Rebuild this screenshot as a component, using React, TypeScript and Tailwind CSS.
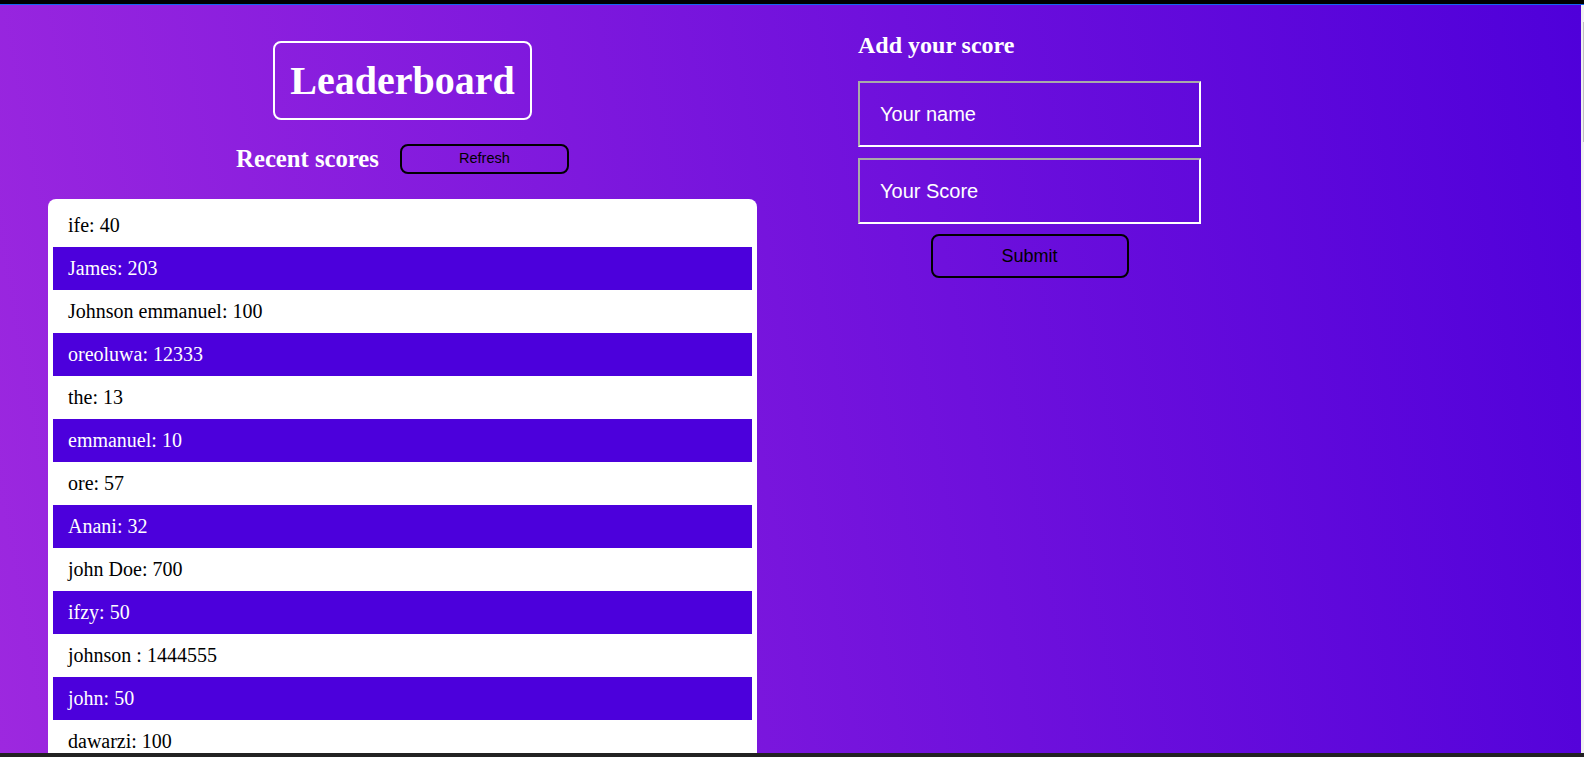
import { useState } from "react";

const scores = [
  { user: "ife", score: 40 },
  { user: "James", score: 203 },
  { user: "Johnson emmanuel", score: 100 },
  { user: "oreoluwa", score: 12333 },
  { user: "the", score: 13 },
  { user: "emmanuel", score: 10 },
  { user: "ore", score: 57 },
  { user: "Anani", score: 32 },
  { user: "john Doe", score: 700 },
  { user: "ifzy", score: 50 },
  { user: "johnson ", score: 1444555 },
  { user: "john", score: 50 },
  { user: "dawarzi", score: 100 },
  { user: "ada", score: 25 },
  { user: "tobi", score: 90 },
];

const serif = "font-['Liberation_Serif','Times_New_Roman',serif]";
const sans = "font-['Liberation_Sans',Arial,sans-serif]";

export default function App() {
  const [name, setName] = useState("");
  const [score, setScore] = useState("");

  return (
    <div className="flex h-[757px] w-full flex-col overflow-hidden">
      {/* browser chrome edge */}
      <div className="h-[4px] bg-black" />
      <div className="h-px bg-[#1565f0]" />

      <div className="flex min-h-0 flex-1">
        <main className="flex min-w-0 flex-1 overflow-hidden bg-[linear-gradient(80deg,#9d28df_0%,#4f00da_100%)]">
          {/* Left column: leaderboard */}
          <section className="flex w-[805px] shrink-0 flex-col items-center pt-[36px]">
            <h1
              className={`${serif} rounded-lg border-2 border-white px-[15px] py-[14.5px] text-[40px] font-bold leading-[46px] text-white`}
            >
              Leaderboard
            </h1>

            <div className="mt-[24px] flex items-center gap-[21px]">
              <h2 className={`${serif} text-[24.7px] font-bold leading-[28px] text-white`}>
                Recent scores
              </h2>
              <button
                type="button"
                className={`${sans} h-[30px] w-[169px] rounded-lg border-2 border-black bg-transparent text-[14.5px] text-black`}
              >
                Refresh
              </button>
            </div>

            <ul className="mt-[25px] w-[709px] rounded-lg bg-white p-[5px]">
              {scores.map((s, i) => (
                <li
                  key={i}
                  className={`${serif} px-[15px] py-[10px] text-[20px] leading-[23px] ${
                    i % 2 === 1 ? "bg-[#4c00dc] text-white" : "bg-white text-black"
                  }`}
                >
                  {s.user}: {s.score}
                </li>
              ))}
            </ul>
          </section>

          {/* Right column: form */}
          <section className="flex flex-col pl-[53px] pt-[26px]">
            <h2 className={`${serif} text-[24px] font-bold leading-[28px] text-white`}>
              Add your score
            </h2>
            <form
              className="mt-[22px] flex w-[343px] flex-col items-center"
              onSubmit={(e) => e.preventDefault()}
            >
              <input
                value={name}
                onChange={(e) => setName(e.target.value)}
                placeholder="Your name"
                className={`${sans} h-[66px] w-full border-2 border-t-[#a9a9a9] border-l-[#a9a9a9] border-r-white border-b-white bg-transparent pl-[20px] text-[20px] text-white outline-none placeholder:text-white`}
              />
              <input
                value={score}
                onChange={(e) => setScore(e.target.value)}
                placeholder="Your Score"
                className={`${sans} mt-[11px] h-[66px] w-full border-2 border-t-[#a9a9a9] border-l-[#a9a9a9] border-r-white border-b-white bg-transparent pl-[20px] text-[20px] text-white outline-none placeholder:text-white`}
              />
              <button
                type="submit"
                className={`${sans} mt-[10px] h-[44px] w-[198px] rounded-lg border-2 border-black bg-transparent text-[18px] text-black`}
              >
                Submit
              </button>
            </form>
          </section>
        </main>

        {/* scrollbar strip */}
        <div className="flex w-[3px] flex-col bg-[#f1f1f1]">
          <div className="mt-[17px] ml-[2px] h-[120px] w-px bg-[#c1c1c1]" />
        </div>
      </div>

      <div className="h-[4px] bg-[#222222]" />
    </div>
  );
}
